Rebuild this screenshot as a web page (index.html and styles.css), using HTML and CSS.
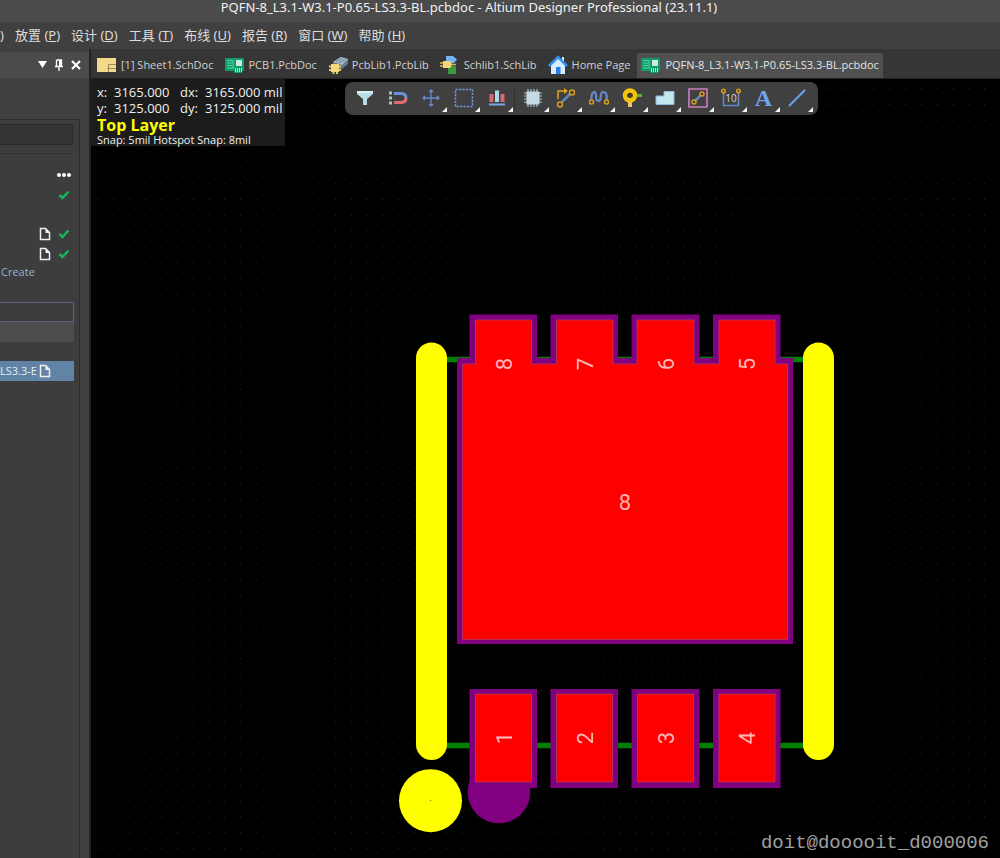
FILE: index.html
```html
<!DOCTYPE html>
<html lang="zh-CN">
<head>
<meta charset="utf-8">
<title>PQFN-8_L3.1-W3.1-P0.65-LS3.3-BL.pcbdoc - Altium Designer Professional (23.11.1)</title>
<link rel="stylesheet" href="styles.css">
</head>
<body>
<svg class="defs" aria-hidden="true">
  <symbol id="page" viewBox="0 0 12 14"><path d="M1.5 1.5h5l4 4v7h-9z" fill="none" stroke="#f0f0f0" stroke-width="1.5"/><path d="M6.5 1v5h4.500z" fill="#f0f0f0"/></symbol>
  <symbol id="check" viewBox="0 0 12 10"><path d="M1.500 5l3 3L10.500 1.500" fill="none" stroke="#16b45c" stroke-width="2.500"/></symbol>
  <symbol id="board" viewBox="0 0 20 16"><path d="M0 1h19v13h-2v2H9v-2H0z" fill="#0d9d68"/><path d="M2 3.500h6M2 6h5M2 8.500h5M2 11h7M8 3v8" stroke="#57d3a0" fill="none"/><path d="M11 3h6v6h-6z" fill="#cfe6e4"/><path d="M10.500 11v4M12.500 11v4M14.500 11v4M16.500 11v4" stroke="#c9e87a"/></symbol>
</svg>
<header class="title">PQFN-8_L3.1-W3.1-P0.65-LS3.3-BL.pcbdoc - Altium Designer Professional (23.11.1)</header>
<nav class="menu">
  <button class="cut">)</button>
  <button>放置 (<u>P</u>)</button>
  <button>设计 (<u>D</u>)</button>
  <button>工具 (<u>T</u>)</button>
  <button>布线 (<u>U</u>)</button>
  <button>报告 (<u>R</u>)</button>
  <button>窗口 (<u>W</u>)</button>
  <button>帮助 (<u>H</u>)</button>
</nav>
<div class="work">
  <aside class="side">
    <div class="side-head">
      <button aria-label="Menu"><svg width="10" height="12" viewBox="0 0 10 12"><path d="M1 2h9L5.500 9z" fill="#fff"/></svg></button>
      <button aria-label="Pin"><svg width="10" height="12" viewBox="0 0 10 12"><path d="M2.500 1h5v6M2.500 1v6M1 7.500h8M5 8v4" fill="none" stroke="#fff" stroke-width="1.300"/><path d="M5 1h3v6H5z" fill="#fff"/></svg></button>
      <button aria-label="Close"><svg width="10" height="12" viewBox="0 0 10 12"><path d="M1 2l8 8M9 2l-8 8" stroke="#fff" stroke-width="2.200"/></svg></button>
    </div>
    <div class="side-body">
      <input class="search" type="text" aria-label="Search">
      <div class="rows">
        <div class="row"><button aria-label="More"><svg width="14" height="4" viewBox="0 0 14 4"><path d="M2 2h.01M7 2h.01M12 2h.01" stroke="#fff" stroke-width="4" stroke-linecap="round"/></svg></button></div>
        <div class="row"><svg class="check"><use href="#check"/></svg></div>
        <div class="row short"></div>
        <div class="row"><svg class="page"><use href="#page"/></svg><svg class="check"><use href="#check"/></svg></div>
        <div class="row"><svg class="page"><use href="#page"/></svg><svg class="check"><use href="#check"/></svg></div>
        <a class="create" href="#">Create</a>
      </div>
      <input class="filter" type="text" aria-label="Filter">
      <div class="group"></div>
      <div class="selected"><span>LS3.3-E</span><svg class="page"><use href="#page"/></svg></div>
    </div>
  </aside>
  <main class="main">
    <nav class="tabs">
      <a href="#" class="tab"><svg width="20" height="20" viewBox="0 0 20 20"><path d="M0 3h19v14H0z" fill="#f3d98a"/><path d="M19 9.500h-7.500V17M10 13.500h9" stroke="#a08a58" fill="none"/></svg><span>[1] Sheet1.SchDoc</span></a>
      <a href="#" class="tab"><svg width="20" height="16"><use href="#board"/></svg><span>PCB1.PcbDoc</span></a>
      <a href="#" class="tab"><svg width="20" height="20" viewBox="0 0 20 20"><path d="M5 7l8-5 7 2v5l-7 6-8-3z" fill="#5f7c92"/><path d="M5 7l8-5 7 2-6 6z" fill="#a3bbcb"/><path d="M8 7l7-4M11 8l7-4" stroke="#6d879b"/><path d="M3 9h8v8H3z" fill="#f7d978"/><path d="M1 11.500h2M1 15h2M11 11.500h2M11 15h2M4.500 18h2M8 18h2" stroke="#e6c86c" stroke-width="1.800"/></svg><span>PcbLib1.PcbLib</span></a>
      <a href="#" class="tab"><svg width="20" height="20" viewBox="0 0 20 20"><path d="M6 1h7l4 3.500L14 8H6z" fill="#78b4f5"/><path d="M8 11h8v8H8z" fill="#3d9940"/><path d="M3 6h7q4 3.500 0 7H3z" fill="#f5d67a"/><path d="M0 8h3M0 11h3M12 9.500h4" stroke="#d7b75b" stroke-width="1.500"/></svg><span>Schlib1.SchLib</span></a>
      <a href="#" class="tab"><svg width="20" height="20" viewBox="0 0 20 20"><path d="M14 2h2v5h-2z" fill="#d8ecff"/><path d="M3 9l7-7 7 7v10H3z" fill="#d8ecff"/><path d="M1 11L10 2l9 9" stroke="#3191ef" stroke-width="2.500" fill="none"/><path d="M8 12h4.500v7H8z" fill="#2684e6"/></svg><span>Home Page</span></a>
      <a href="#" class="tab active" aria-current="page"><svg width="20" height="16"><use href="#board"/></svg><span>PQFN-8_L3.1-W3.1-P0.65-LS3.3-BL.pcbdoc</span></a>
    </nav>
    <section class="canvas">
      <svg class="pcb" viewBox="91 79 909 779" preserveAspectRatio="xMidYMid slice" role="img" aria-label="PCB layout">
        <defs>
          <pattern id="grid" x="430" y="800.500" width="15.830" height="15.830" patternUnits="userSpaceOnUse"><path d="M0 0h1v1H0z" fill="#262626"/></pattern>
        </defs>
        <path d="M91 79h909v779H91z" fill="url(#grid)"/>
        <path d="M431 359.500h387M431 745.500h387" stroke="#008000" stroke-width="5.500"/>
        <path d="M431.500 358v386.500M818.500 358v386.500" stroke="#ff0" stroke-width="31" stroke-linecap="round"/>
        <g fill="#800080">
          <path d="M469.500 314.500H537v43.500h13.500v-43.500H618v43.500h13.500v-43.500h68v43.500H713v-43.500h67.500v43.500H793v286H457V358h12.500z"/>
          <path d="M469.500 689H537v99h-67.500zM550.500 689H618v99h-67.500zM631.500 689h68v99h-68zM713 689h67.500v99H713z"/>
          <circle cx="499" cy="792" r="31.300"/>
        </g>
        <path d="M475.500 320h56v44h25v-44H613v44h24v-44h57v44h25v-44h56v44h12.500v275.500h-325V364h13zM475.500 694h56v88h-56zM556.500 694h56v88h-56zM637.500 694h56v88h-56zM719 694h56v88h-56z" fill="#f00" stroke="#b33a62" stroke-width=".8"/>
        <circle cx="430.500" cy="800.700" r="31.500" fill="#ff0"/>
        <path d="M430 800h1v1h-1z" fill="#770"/>
        <g class="pin">
          <text x="625" y="510">8</text>
          <text transform="translate(512 364) rotate(-90)">8</text>
          <text transform="translate(593 364) rotate(-90)">7</text>
          <text transform="translate(674 364) rotate(-90)">6</text>
          <text transform="translate(755 364) rotate(-90)">5</text>
          <text transform="translate(512 738) rotate(-90)">1</text>
          <text transform="translate(593 738) rotate(-90)">2</text>
          <text transform="translate(674 738) rotate(-90)">3</text>
          <text transform="translate(755 738) rotate(-90)">4</text>
        </g>
      </svg>
      <div class="hud">
        <div class="coords">
          <span>x:</span><span>3165.000</span><span>dx:</span><span>3165.000 mil</span>
          <span>y:</span><span>3125.000</span><span>dy:</span><span>3125.000 mil</span>
        </div>
        <strong>Top Layer</strong>
        <div class="snap">Snap: 5mil Hotspot Snap: 8mil</div>
      </div>
      <div class="tools" role="toolbar">
        <button aria-label="Filter"><svg viewBox="0 0 20 20"><path d="M2 3h16v3l-6 5v6H8v-6L2 6z" fill="#b9dde4"/><path d="M2 3h16v2H2z" fill="#d8f0f3"/></svg></button>
        <button aria-label="Snap"><svg viewBox="0 0 20 20"><path d="M6 5.500h7q5 0 5 4.500" stroke="#6f93d8" stroke-width="3" fill="none"/><path d="M18 10q0 4.500-5 4.500H6" stroke="#e06c75" stroke-width="3" fill="none"/><path d="M1 3.500h3v3H1zM1 8.500h3v3H1zM1 13.500h3v3H1z" fill="#a8c4b8"/></svg></button>
        <button class="more" aria-label="Move"><svg viewBox="0 0 20 20"><path d="M10 2v16M2 10h16M8 4l2-2 2 2M8 16l2 2 2-2M4 8l-2 2 2 2M16 8l2 2-2 2" fill="none" stroke="#6989cc" stroke-width="1.300"/></svg></button>
        <button class="more" aria-label="Select"><svg viewBox="0 0 20 20"><path d="M1.500 1.500h17v17h-17z" fill="none" stroke="#7295dc" stroke-width="1.500" stroke-dasharray="2.200 1.200"/></svg></button>
        <button class="more" aria-label="Align"><svg viewBox="0 0 20 20"><path d="M2.500 6h4v8h-4zM13.500 6h4v8h-4z" fill="#dd6673"/><path d="M8 2.500h4V14H8z" fill="#a9dce6"/><path d="M2 16.500h16" stroke="#7ca5e8" stroke-width="2"/></svg></button>
        <i class="sep"></i>
        <button class="more" aria-label="Component"><svg viewBox="0 0 20 20"><path d="M5 1v18M8 1v18M11 1v18M14 1v18M1 5h18M1 8h18M1 11h18M1 14h18" stroke="#aebfc9" stroke-width="1.200"/><path d="M3.500 3.500h13v13h-13z" fill="#c5dae5"/></svg></button>
        <button class="more" aria-label="Route"><svg viewBox="0 0 20 20"><path d="M6 14l8-8" stroke="#5f86bd" stroke-width="2.500"/><path d="M2 11V3h8" stroke="#e3a21a" stroke-width="1.500" fill="none"/><path d="M8 0l4 3-4 3z" fill="#e3a21a"/><circle cx="16" cy="4.500" r="2.500" class="via"/><circle cx="4" cy="16.500" r="2.500" class="via"/></svg></button>
        <button class="more" aria-label="Tune"><svg viewBox="0 0 20 20"><path d="M2.500 12C2 3 7 2 7 7s0 6 3 6 0-9 4-9 4 4 3.500 8" fill="none" stroke="#6889cc" stroke-width="2.200"/><circle cx="2.500" cy="14" r="2" class="via"/><circle cx="17.500" cy="14" r="2" class="via"/></svg></button>
        <button class="more" aria-label="Via"><svg viewBox="0 0 20 20"><path d="M8 8v11" stroke="#edc06b" stroke-width="4"/><path d="M14 7.500h6" stroke="#54b52d" stroke-width="3"/><circle cx="8" cy="7.500" r="5" fill="none" stroke="#f2c40c" stroke-width="4.500"/><circle cx="8" cy="7.500" r="2.500" fill="#463b1c"/></svg></button>
        <button class="more" aria-label="Polygon"><svg viewBox="0 0 20 20"><path d="M1 8h8V3.500h10v13H1z" fill="#c3e7f0" stroke="#8eb7d5"/></svg></button>
        <button class="more" aria-label="Keepout"><svg viewBox="0 0 20 20"><path d="M1 1h18v18H1z" fill="none" stroke="#cf7dc0" stroke-width="1.600"/><path d="M7 13l6-6" stroke="#6587bd" stroke-width="2.500"/><circle cx="14" cy="6" r="2" class="via"/><circle cx="6" cy="14" r="2" class="via"/></svg></button>
        <button class="more" aria-label="Dimension"><svg viewBox="0 0 20 20"><path d="M2.500 5v12.500h15V5" fill="none" stroke="#6388c5" stroke-width="1.600"/><circle cx="2.500" cy="3" r="1.800" class="via"/><circle cx="17.500" cy="3" r="1.800" class="via"/><text x="10" y="14" class="dim">10</text></svg></button>
        <button class="more letter" aria-label="Text">A</button>
        <button class="more" aria-label="Line"><svg viewBox="0 0 20 20"><path d="M2 18L18 2" stroke="#6a9ff0" stroke-width="2.200"/></svg></button>
      </div>
      <div class="mark">doit@dooooit_d000006</div>
    </section>
  </main>
</div>
</body>
</html>
```
FILE: styles.css
```css
* { box-sizing: border-box; }
html, body { height: 100%; }
body {
  margin: 0;
  display: flex;
  flex-direction: column;
  background: #000;
  color: #ddd;
  font: 11px "Open Sans", "Noto Sans CJK SC", sans-serif;
  overflow: hidden;
}
button { border: 0; padding: 0; background: none; color: inherit; font: inherit; }
a { color: inherit; text-decoration: none; }
svg { display: block; flex: none; }
.defs { position: absolute; width: 0; height: 0; }

.title {
  height: 22px;
  padding-right: 62px;
  background: #4b4b4b;
  color: #f2f2f2;
  font: 13px/14px "Noto Sans", sans-serif;
  text-align: center;
  white-space: nowrap;
}
.menu {
  display: flex;
  gap: 11px;
  height: 27px;
  background: #404040;
  font: 13px/27px "Noto Sans", "Noto Sans CJK SC", sans-serif;
  white-space: nowrap;
}
.menu .cut { width: 4px; }
.work { flex: 1; display: flex; min-height: 0; }

.side {
  width: 91px;
  flex: none;
  display: flex;
  flex-direction: column;
  background: #404040;
  border-right: 2px solid #242424;
}
.side-head {
  display: flex;
  justify-content: flex-end;
  align-items: center;
  gap: 7px;
  height: 26px;
  margin-top: 3px;
  padding-right: 8px;
  background: #4b4b4b;
}
.side-body {
  flex: 1;
  display: flex;
  flex-direction: column;
  align-items: flex-start;
  width: 80px;
  margin-top: 41px;
  padding: 4px 0 0;
  background: #3d3d3d;
  border: 1px solid #2d2d2d;
  border-width: 1px 1px 0 0;
}
.search {
  width: 73px;
  height: 21px;
  background: #343434;
  border: 1px solid #2a2a2a;
  border-left: 0;
  border-radius: 0 2px 2px 0;
}
.rows { width: 72px; margin-top: 8px; padding-top: 11px; border-top: 1px solid #303030; }
.row { display: flex; justify-content: flex-end; align-items: center; gap: 7px; height: 20px; padding-right: 1px; }
.row.short { height: 19px; }
.page { width: 12px; height: 14px; }
.check { width: 12px; height: 10px; margin-right: 1px; }
.create { display: block; padding-left: 1px; color: #8fb4dc; line-height: 16px; }
.filter { width: 74px; height: 20px; margin-top: 22px; background: #3d3d3f; border: 1px solid #5b6380; border-left: 0; }
.group { width: 74px; height: 20px; background: #4d4d4d; }
.selected {
  display: flex;
  align-items: center;
  gap: 3px;
  width: 74px;
  height: 20px;
  margin-top: 19px;
  background: #6083a6;
  color: #e4edf5;
  line-height: 20px;
}
.selected span { width: 36px; white-space: nowrap; }

.main { flex: 1; min-width: 0; display: flex; flex-direction: column; }
.tabs { display: flex; gap: 3px; height: 30px; padding: 4px 0 0 2px; background: #363636; border-bottom: 1px solid #222; }
.tab { display: flex; align-items: center; gap: 4px; padding: 0 4px 2px; white-space: nowrap; color: #d0d0d0; }
.tab.active { background: #505050; border-radius: 2px 2px 0 0; color: #e4e4e4; }

.canvas { position: relative; flex: 1; min-height: 0; overflow: hidden; }
.pcb { width: 100%; height: 100%; }
.pin { fill: #ffb4b4; font: 22px "Liberation Sans Narrow", Roboto, sans-serif; text-anchor: middle; }
.hud {
  position: absolute;
  left: 0;
  top: 0;
  padding: 5px 3px 0 6px;
  background: #1c1c1c;
  color: #f0f0f0;
}
.coords {
  display: grid;
  grid-template-columns: 17px 66px 25px auto;
  font-size: 13px;
  line-height: 16px;
  white-space: nowrap;
}
.hud strong { display: block; color: #ff0; font-size: 16px; line-height: 18px; }
.snap { line-height: 12px; }
.tools {
  position: absolute;
  left: 254px;
  top: 3px;
  display: flex;
  align-items: center;
  padding: 0 5px 0 3px;
  background: #404040;
  border-radius: 8px;
}
.tools button { position: relative; display: grid; place-items: center; width: 33px; height: 33px; padding-bottom: 1px; }
.tools svg { width: 20px; height: 20px; }
.more::after {
  content: "";
  position: absolute;
  right: 0;
  bottom: 3px;
  width: 5px;
  height: 5px;
  background: #f4f4f4;
  clip-path: polygon(100% 0, 100% 100%, 0 100%);
}
.sep { width: 1px; height: 20px; margin: 0 1px; background: #303030; }
.via { fill: #404040; stroke: #d99b1c; stroke-width: 1.5px; }
.dim { fill: #d8d8d8; font: 10px "Open Sans", sans-serif; text-anchor: middle; }
.tools .letter { color: #6fa3ee; font: bold 24px/32px "Liberation Serif", serif; }
.mark {
  position: absolute;
  right: 11px;
  bottom: 4px;
  color: #a0a0a0;
  font: 19px "Liberation Mono", monospace;
}
```
